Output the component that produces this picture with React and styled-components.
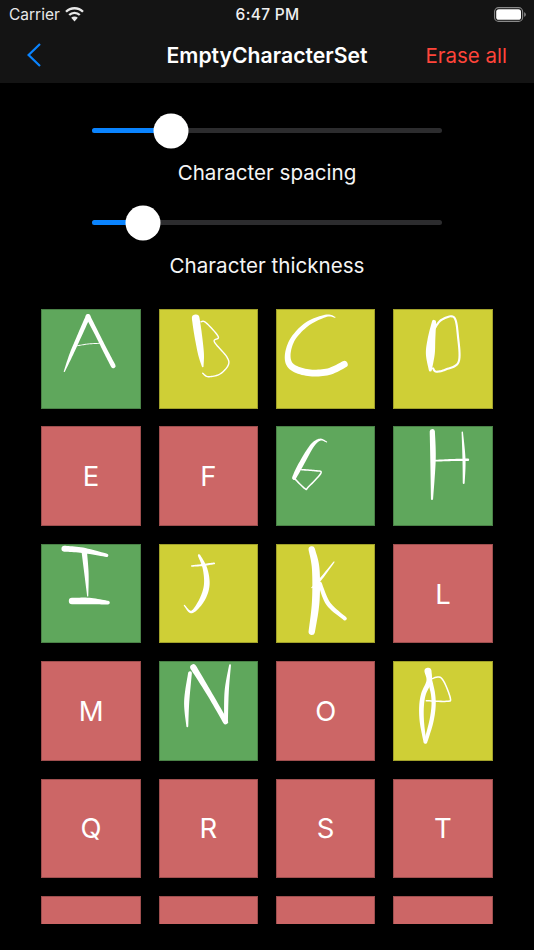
import React from "react";
import styled, { createGlobalStyle } from "styled-components";

const GlobalStyle = createGlobalStyle`
  html, body {
    margin: 0;
    padding: 0;
    background: #000;
  }
  body {
    font-family: Inter, "Liberation Sans", sans-serif;
    color: #fff;
  }
`;

const Page = styled.div`
  width: 534px;
  height: 950px;
  overflow: hidden;
  background: #000;
`;

const Header = styled.header`
  height: 83px;
  background: #141414;
`;

const StatusBar = styled.div`
  height: 28px;
  padding: 0 8px 0 9px;
  display: grid;
  grid-template-columns: 1fr auto 1fr;
  align-items: center;
  font-size: 15.5px;
`;

const Carrier = styled.div`
  display: flex;
  align-items: center;
  gap: 5px;
  color: #e8e8e8;
`;

const Clock = styled.div`
  font-size: 15.5px;
  font-weight: 500;
  letter-spacing: 0.3px;
  color: #f0f0f0;
`;

const BatteryWrap = styled.div`
  justify-self: end;
  display: flex;
`;

const NavBar = styled.nav`
  height: 54px;
  padding: 0 27px;
  display: grid;
  grid-template-columns: 1fr auto 1fr;
  align-items: center;
`;

const BackLink = styled.a`
  display: flex;
  align-items: center;
`;

const Title = styled.h1`
  margin: 0;
  font-size: 21.2px;
  font-weight: 600;
  color: #fff;
`;

const EraseButton = styled.button`
  justify-self: end;
  padding: 0;
  border: 0;
  background: none;
  font: inherit;
  font-size: 20.5px;
  color: #ff453a;
`;

const Controls = styled.section`
  height: 226px;
  padding-top: 30px;
  box-sizing: border-box;
  display: flex;
  flex-direction: column;
  align-items: center;
`;

const Track = styled.div`
  position: relative;
  width: 350px;
  height: 5px;
  flex: none;
  margin-top: ${(p) => p.$top}px;
  border-radius: 3px;
  background: #2c2c2e;
`;

const TrackFill = styled.div`
  height: 100%;
  border-radius: 3px 0 0 3px;
  background: #0a84ff;
`;

const Thumb = styled.div`
  position: absolute;
  top: 50%;
  width: 35px;
  height: 35px;
  border-radius: 50%;
  background: #fff;
  transform: translate(-50%, -50%);
`;

const SliderLabel = styled.div`
  margin-top: ${(p) => p.$gap}px;
  font-size: 20.6px;
  line-height: 26px;
  color: #f5f5f5;
`;

const GridClip = styled.section`
  height: 615px;
  overflow: hidden;
`;

const TileGrid = styled.div`
  padding-left: 41.3px;
  display: grid;
  grid-template-columns: repeat(4, 99.5px);
  grid-auto-rows: 99.6px;
  column-gap: 17.8px;
  row-gap: 17.8px;
`;

const tileColors = {
  done: "#5fa75c",
  partial: "#cfcf36",
  empty: "#cc6666",
};

const Tile = styled.div`
  position: relative;
  box-sizing: border-box;
  display: flex;
  align-items: center;
  justify-content: center;
  border: 1px solid rgba(0, 0, 0, 0.22);
  background: ${(p) => tileColors[p.$status]};
  font-size: 27.5px;
  color: #fff;
`;

const Sketch = styled.svg`
  position: absolute;
  left: -1px;
  top: -1px;
  width: 99.5px;
  height: 99.6px;
  overflow: hidden;
`;

// turns [x, y, width] points into a filled, tapering pen stroke with round ends
function brush(points) {
  const pts = [];
  const at = (i) => points[Math.max(0, Math.min(points.length - 1, i))];
  for (let i = 0; i < points.length - 1; i++) {
    const [a, b, c, d] = [at(i - 1), at(i), at(i + 1), at(i + 2)];
    for (let s = 0; s < 10; s++) {
      const t = s / 10;
      pts.push(
        [0, 1, 2].map(
          (k) =>
            0.5 *
            (2 * b[k] +
              (c[k] - a[k]) * t +
              (2 * a[k] - 5 * b[k] + 4 * c[k] - d[k]) * t * t +
              (3 * b[k] - a[k] - 3 * c[k] + d[k]) * t * t * t)
        )
      );
    }
  }
  pts.push(points[points.length - 1]);
  const left = [];
  const right = [];
  const radius = (p) => Math.max(p[2] * 1.18, 0.5) / 2;
  pts.forEach((p, i) => {
    const prev = pts[Math.max(0, i - 1)];
    const next = pts[Math.min(pts.length - 1, i + 1)];
    const dx = next[0] - prev[0];
    const dy = next[1] - prev[1];
    const len = Math.hypot(dx, dy) || 1;
    const w = radius(p);
    left.push(`${(p[0] - (dy / len) * w).toFixed(2)} ${(p[1] + (dx / len) * w).toFixed(2)}`);
    right.unshift(`${(p[0] + (dy / len) * w).toFixed(2)} ${(p[1] - (dx / len) * w).toFixed(2)}`);
  });
  const endR = radius(pts[pts.length - 1]).toFixed(2);
  const startR = radius(pts[0]).toFixed(2);
  return `M${left.join("L")}A${endR} ${endR} 0 0 0 ${right.join("L")}A${startR} ${startR} 0 0 0 ${left[0]}Z`;
}

const thin = (w, list) => list.map(([x, y]) => [x, y, w]);

// the pen strokes the user drew in each finished tile
const drawings = {
  A: [
    [[47, 7.5, 4], [37, 30, 3.6], [30, 46, 3], [23.3, 62.5, 1]],
    [[47, 7.5, 4], [57, 27, 3.6], [65, 43, 3.8], [72.3, 57, 4]],
    thin(0.8, [[36.5, 36.7], [47, 35], [58.3, 34.3]]),
  ],
  B: [
    [[36.7, 9.3, 6.5], [39, 25, 6.5], [42, 45, 5], [43.7, 57.5, 1.4]],
    thin(1.2, [[42, 12.7], [47, 13.7], [59.3, 27.7], [55.3, 32.7], [67.7, 47.7], [69.3, 56], [61, 65], [49.3, 67.7], [43.7, 64.3]]),
  ],
  C: [[[59, 8.3, 0.8], [50.7, 6.7, 2], [32.3, 14.3, 3.6], [17.3, 29.3, 4], [11.7, 46, 4.8], [15.7, 57.7, 5.6], [32.3, 63.7, 5.8], [52.3, 62.7, 5.8], [68.3, 55.3, 5.8]]],
  D: [
    [[41, 13, 3.6], [38.5, 30, 6.5], [37.3, 45, 7.5], [37.3, 61, 2.6]],
    thin(1.8, [[41.7, 19.3], [48.3, 11], [61, 8.3], [65, 27.7], [65.7, 52.7], [53.3, 60.3], [43.3, 62.7], [40, 59.3]]),
  ],
  G: [
    [[50.7, 16, 0.8], [44, 13.7, 1.8], [35.7, 20.3, 3.4], [24, 40.3, 4.4], [18, 52, 3.4]],
    thin(1.3, [[18, 52], [29, 62.7], [32.3, 61], [45, 47], [39, 44.7], [25.7, 43.7]]),
  ],
  H: [
    [[39.3, 5.3, 4.4], [40, 33.7, 4.6], [39, 73, 1.8]],
    [[69.3, 6.3, 1.2], [71, 33.7, 2.6], [70.7, 57, 1.6]],
    [[42.3, 34.7, 1.5], [60, 34, 1.8], [75, 33.7, 2]],
  ],
  I: [
    [[23.3, 4.7, 5], [41.7, 6.3, 4.6], [65.7, 11.3, 2.8]],
    [[43.3, 8, 4.6], [45.5, 30, 3.6], [46.7, 52, 1]],
    [[31, 57, 5.4], [48.3, 57, 5.4], [67, 58.7, 3.2]],
  ],
  J: [
    [[40, 11.3, 2], [46, 24.7, 3.8], [47.7, 41.3, 4.8], [42.7, 56.3, 4.4], [32.7, 68, 2.2], [25.3, 61.3, 1]],
    [[32.7, 22, 1.2], [44, 21, 1.8], [55.3, 19.3, 1.5]],
  ],
  K: [
    [[35.7, 5.3, 5.4], [39.7, 24.7, 6.4], [39.7, 58, 6.4], [35.7, 88, 5.4]],
    [[58, 18, 1], [42.3, 38, 2.2], [35.7, 43.7, 0.8]],
    [[44, 39.7, 3.2], [52.3, 59.7, 3.8], [69, 74.7, 3.2]],
  ],
  N: [
    [[31, 12, 3.2], [27.7, 40.3, 4.4], [28.3, 65.3, 1.6]],
    [[34.3, 6.3, 5.4], [51, 33.7, 4.4], [66.7, 61, 4.4]],
    [[71, 4.3, 1.6], [67.7, 30.3, 3.6], [67, 60.3, 3.2]],
  ],
  P: [
    [[35, 10.3, 6], [36, 20, 4.4], [30.5, 33, 4], [28.5, 46, 4], [29, 62, 3.6], [32, 81, 2.4]],
    [[37, 20, 4], [40, 33, 3.6], [40.5, 46, 3.6], [38, 62, 3.6], [32.5, 81, 3]],
    thin(1.3, [[36.7, 18.7], [48.3, 17], [57.3, 37], [53.3, 40.3], [33.3, 39.7]]),
  ],
};

// the last row is cut off by the bottom of the scroll area, its letters are out of sight
const tiles = [
  ["A", "done"], ["B", "partial"], ["C", "partial"], ["D", "partial"],
  ["E", "empty"], ["F", "empty"], ["G", "done"], ["H", "done"],
  ["I", "done"], ["J", "partial"], ["K", "partial"], ["L", "empty"],
  ["M", "empty"], ["N", "done"], ["O", "empty"], ["P", "partial"],
  ["Q", "empty"], ["R", "empty"], ["S", "empty"], ["T", "empty"],
  ["", "empty"], ["", "empty"], ["", "empty"], ["", "empty"],
];

function WifiIcon() {
  return (
    <svg width="19" height="15" viewBox="0 0 19 15" fill="none">
      <path d="M1 4.8A12 12 0 0 1 18 4.8" stroke="#e8e8e8" strokeWidth="2.3" />
      <path d="M4.2 8A7.5 7.5 0 0 1 14.8 8" stroke="#e8e8e8" strokeWidth="2.3" />
      <path d="M9.5 14.5L6.2 10.8A4.7 4.7 0 0 1 12.8 10.8Z" fill="#e8e8e8" />
    </svg>
  );
}

function BatteryIcon() {
  return (
    <svg width="32" height="15" viewBox="0 0 32 15" fill="none">
      <rect x="0.6" y="0.6" width="28" height="13.8" rx="4" stroke="#8a8a8a" strokeWidth="1.1" />
      <rect x="2.2" y="2.2" width="24.8" height="10.6" rx="2.6" fill="#fff" />
      <path d="M30.2 5.2C31.2 5.6 31.8 6.4 31.8 7.5S31.2 9.4 30.2 9.8Z" fill="#8a8a8a" />
    </svg>
  );
}

function BackChevron() {
  return (
    <svg width="14" height="24" viewBox="0 0 14 24" fill="none">
      <path d="M13 1L1.6 12L13 23" stroke="#0a84ff" strokeWidth="2.2" />
    </svg>
  );
}

function Slider({ value, label, top, gap }) {
  return (
    <>
      <Track $top={top}>
        <TrackFill style={{ width: `${value * 100}%` }} />
        <Thumb style={{ left: `${value * 100}%` }} />
      </Track>
      <SliderLabel $gap={gap}>{label}</SliderLabel>
    </>
  );
}

function CharacterTile({ letter, status }) {
  const strokes = drawings[letter];
  return (
    <Tile $status={status}>
      {strokes ? (
        <Sketch viewBox="0 0 99.5 99.6" role="img" aria-label={letter}>
          {strokes.map((s, i) => (
            <path key={i} d={brush(s)} fill="#fff" />
          ))}
        </Sketch>
      ) : (
        letter
      )}
    </Tile>
  );
}

export default function App() {
  return (
    <Page>
      <GlobalStyle />
      <Header>
        <StatusBar>
          <Carrier>
            Carrier
            <WifiIcon />
          </Carrier>
          <Clock>6:47 PM</Clock>
          <BatteryWrap>
            <BatteryIcon />
          </BatteryWrap>
        </StatusBar>
        <NavBar>
          <BackLink>
            <BackChevron />
          </BackLink>
          <Title>EmptyCharacterSet</Title>
          <EraseButton>Erase all</EraseButton>
        </NavBar>
      </Header>
      <Controls>
        <Slider value={0.226} label="Character spacing" top={15} gap={27} />
        <Slider value={0.146} label="Character thickness" top={34} gap={28} />
      </Controls>
      <GridClip>
        <TileGrid>
          {tiles.map(([letter, status], i) => (
            <CharacterTile key={i} letter={letter} status={status} />
          ))}
        </TileGrid>
      </GridClip>
    </Page>
  );
}
